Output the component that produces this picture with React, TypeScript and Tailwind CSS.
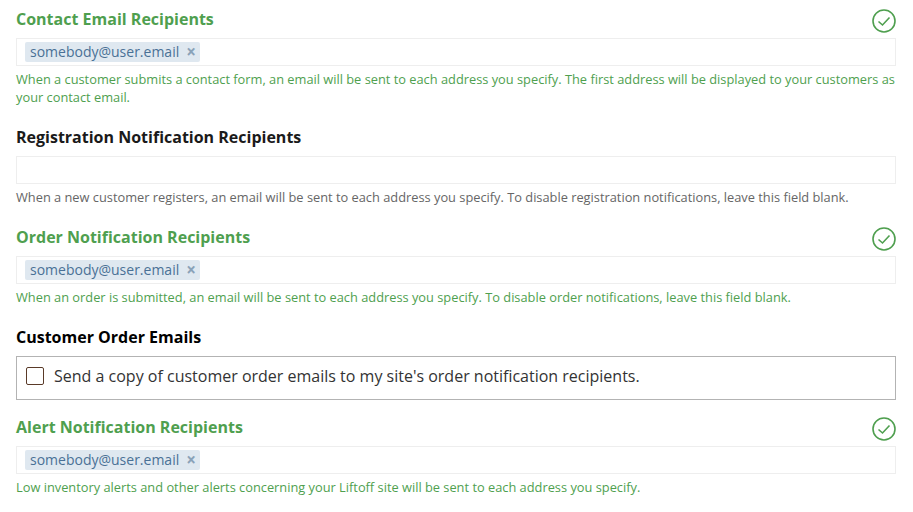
import React from "react";

const GREEN = "text-[#4f9f4f]";

function Check() {
  return (
    <svg width="24" height="24" viewBox="0 0 24 24" fill="none" className="text-[#4f9f4f]">
      <circle cx="12" cy="12" r="11" stroke="currentColor" strokeWidth="1.6" />
      <path d="M6.5 12.5 L10.5 16 L17.5 8.5" stroke="currentColor" strokeWidth="1.6" fill="none" />
    </svg>
  );
}

function Tag() {
  return (
    <span className="flex h-5 w-[175px] items-center rounded-[2px] bg-[#dfe8f0] pb-[2px] pl-[5px] text-[14px] text-[#4a7196]">
      somebody@user.email
      <span className="ml-[7px] text-[17px] font-bold leading-none text-[#8aa2b8]">×</span>
    </span>
  );
}

function Field({
  title,
  ok,
  email,
  help,
}: {
  title: string;
  ok?: boolean;
  email?: boolean;
  help: string;
}) {
  return (
    <div className="flex flex-col">
      <div className="flex h-[29px] items-start justify-between">
        <h3 className={`text-[16px] font-bold leading-[20px] ${ok ? GREEN : "text-[#1a1a1a]"}`}>{title}</h3>
        {ok && <Check />}
      </div>
      <div className="flex h-7 items-center border border-[#eeeeee] bg-white pl-2">{email && <Tag />}</div>
      <p className={`mt-[4px] text-[12.82px] leading-[18px] ${ok ? GREEN : "text-[#666666]"}`}>{help}</p>
    </div>
  );
}

export default function App() {
  return (
    <div className="h-[512px] w-[913px] overflow-hidden bg-white pl-4 pr-[17px] pt-[9px] font-['Open_Sans',sans-serif]">
      <Field
        title="Contact Email Recipients"
        ok
        email
        help="When a customer submits a contact form, an email will be sent to each address you specify. The first address will be displayed to your customers as your contact email."
      />
      <div className="mt-[21px]">
        <Field
          title="Registration Notification Recipients"
          help="When a new customer registers, an email will be sent to each address you specify. To disable registration notifications, leave this field blank."
        />
      </div>
      <div className="mt-[21px]">
        <Field
          title="Order Notification Recipients"
          ok
          email
          help="When an order is submitted, an email will be sent to each address you specify. To disable order notifications, leave this field blank."
        />
      </div>
      <div className="mt-[21px]">
        <div className="flex h-[29px] items-start">
          <h3 className="text-[16px] font-bold leading-[20px] text-black">Customer Order Emails</h3>
        </div>
        <label className="flex h-[44px] items-center gap-[10px] border border-[#b3b3b3] pb-[4px] pl-[9px]">
          <span className="h-[18px] w-[18px] rounded-[2px] border-[1.5px] border-[#5a3a28]" />
          <span className="text-[16px] text-[#333333]">Send a copy of customer order emails to my site's order notification recipients.</span>
        </label>
      </div>
      <div className="mt-[17px]">
        <Field
          title="Alert Notification Recipients"
          ok
          email
          help="Low inventory alerts and other alerts concerning your Liftoff site will be sent to each address you specify."
        />
      </div>
    </div>
  );
}
